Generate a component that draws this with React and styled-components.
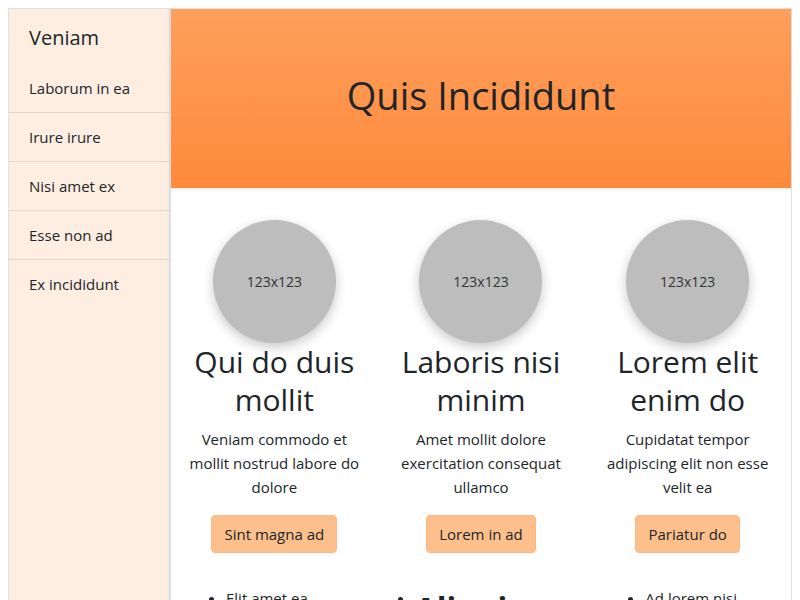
import React from 'react'
import styled, { createGlobalStyle } from 'styled-components'

const GlobalStyle = createGlobalStyle`
  body {
    margin: 8px;
    font-family: "Open Sans", "Noto Sans", sans-serif;
    font-size: 16px;
    line-height: 1.5;
    color: #212529;
    background: #fff;
  }
  * { box-sizing: border-box; }
`

const Layout = styled.div`
  display: flex;
  align-items: stretch;
  min-height: 600px;
`

const Sidebar = styled.aside`
  flex: 0 0 162px;
  background: #feeee2;
  border: 1px solid #dee2e6;
`

const SideTitle = styled.h5`
  margin: 0;
  padding: 17px 20px 14px;
  font-size: 20px;
  font-weight: 400;
  line-height: 1.2;
`

const SideList = styled.ul`
  list-style: none;
  margin: 0;
  padding: 0;
`

const SideItem = styled.li`
  padding: 12px 20px;
  font-size: 15px;
  line-height: 24px;
  border-bottom: 1px solid #e2d6cc;
  &:last-child { border-bottom: none; }
`

const Main = styled.main`
  flex: 1;
  border: 1px solid #dee2e6;
  box-shadow: 0 0 6px rgba(0, 0, 0, 0.06);
`

const Hero = styled.header`
  height: 179px;
  padding-bottom: 6px;
  display: flex;
  align-items: center;
  justify-content: center;
  background: linear-gradient(180deg, #fe9f5b 0%, #fe8a3c 100%);
  box-shadow: 0 2px 4px rgba(0, 0, 0, 0.06);
`

const HeroTitle = styled.h1`
  margin: 0;
  font-size: 38px;
  font-weight: 500;
  line-height: 1.2;
`

const Columns = styled.section`
  display: grid;
  grid-template-columns: repeat(3, 1fr);
  padding: 32px 0 0;
`

const Column = styled.div`
  display: flex;
  flex-direction: column;
  align-items: center;
  padding: 0 15px;
  text-align: center;
`

const Avatar = styled.div`
  width: 123px;
  height: 123px;
  border-radius: 50%;
  background: #bdbdbd;
  display: flex;
  align-items: center;
  justify-content: center;
  font-size: 14px;
  color: #333;
  box-shadow: 0 4px 12px rgba(0, 0, 0, 0.22);
`

const ColTitle = styled.h2`
  margin: 0 0 8px;
  font-size: 30px;
  font-weight: 500;
  line-height: 38px;
`

const ColText = styled.p`
  margin: 0 0 16px;
  font-size: 15px;
  line-height: 24px;
`

const Button = styled.button`
  font-family: inherit;
  font-size: 15px;
  line-height: 24px;
  padding: 6px 12px;
  color: #212529;
  background: #fdc08c;
  border: 1px solid #fbb97f;
  border-radius: 4px;
`

const Bullets = styled.ul`
  align-self: stretch;
  text-align: left;
  margin: 33px 0 0;
  padding-left: ${(p) => p.$indent}px;
  font-size: 15px;
  line-height: 24px;
`

const BigItem = styled.strong`
  font-size: 32px;
  line-height: 1;
  vertical-align: top;
  position: relative;
  top: 7px;
`

const cards = [
  {
    title: 'Qui do duis mollit',
    text: 'Veniam commodo et mollit nostrud labore do dolore',
    button: 'Sint magna ad',
    indent: 40,
    items: [{ text: 'Elit amet ea' }],
  },
  {
    title: 'Laboris nisi minim',
    text: 'Amet mollit dolore exercitation consequat ullamco',
    button: 'Lorem in ad',
    indent: 22,
    items: [{ text: 'Aliquip', big: true }],
  },
  {
    title: 'Lorem elit enim do',
    text: 'Cupidatat tempor adipiscing elit non esse velit ea',
    button: 'Pariatur do',
    indent: 46,
    items: [{ text: 'Ad lorem nisi' }],
  },
]

const navItems = ['Laborum in ea', 'Irure irure', 'Nisi amet ex', 'Esse non ad', 'Ex incididunt']

export default function App() {
  return (
    <>
      <GlobalStyle />
      <Layout>
        <Sidebar>
          <SideTitle>Veniam</SideTitle>
          <SideList>
            {navItems.map((item) => (
              <SideItem key={item}>{item}</SideItem>
            ))}
          </SideList>
        </Sidebar>
        <Main>
          <Hero>
            <HeroTitle>Quis Incididunt</HeroTitle>
          </Hero>
          <Columns>
            {cards.map((card) => (
              <Column key={card.title}>
                <Avatar>123x123</Avatar>
                <ColTitle>{card.title}</ColTitle>
                <ColText>{card.text}</ColText>
                <Button>{card.button}</Button>
                <Bullets $indent={card.indent}>
                  {card.items.map((item) =>
                    <li key={item.text}>
                      {item.big ? <BigItem>{item.text}</BigItem> : item.text}
                    </li>
                  )}
                </Bullets>
              </Column>
            ))}
          </Columns>
        </Main>
      </Layout>
    </>
  )
}
